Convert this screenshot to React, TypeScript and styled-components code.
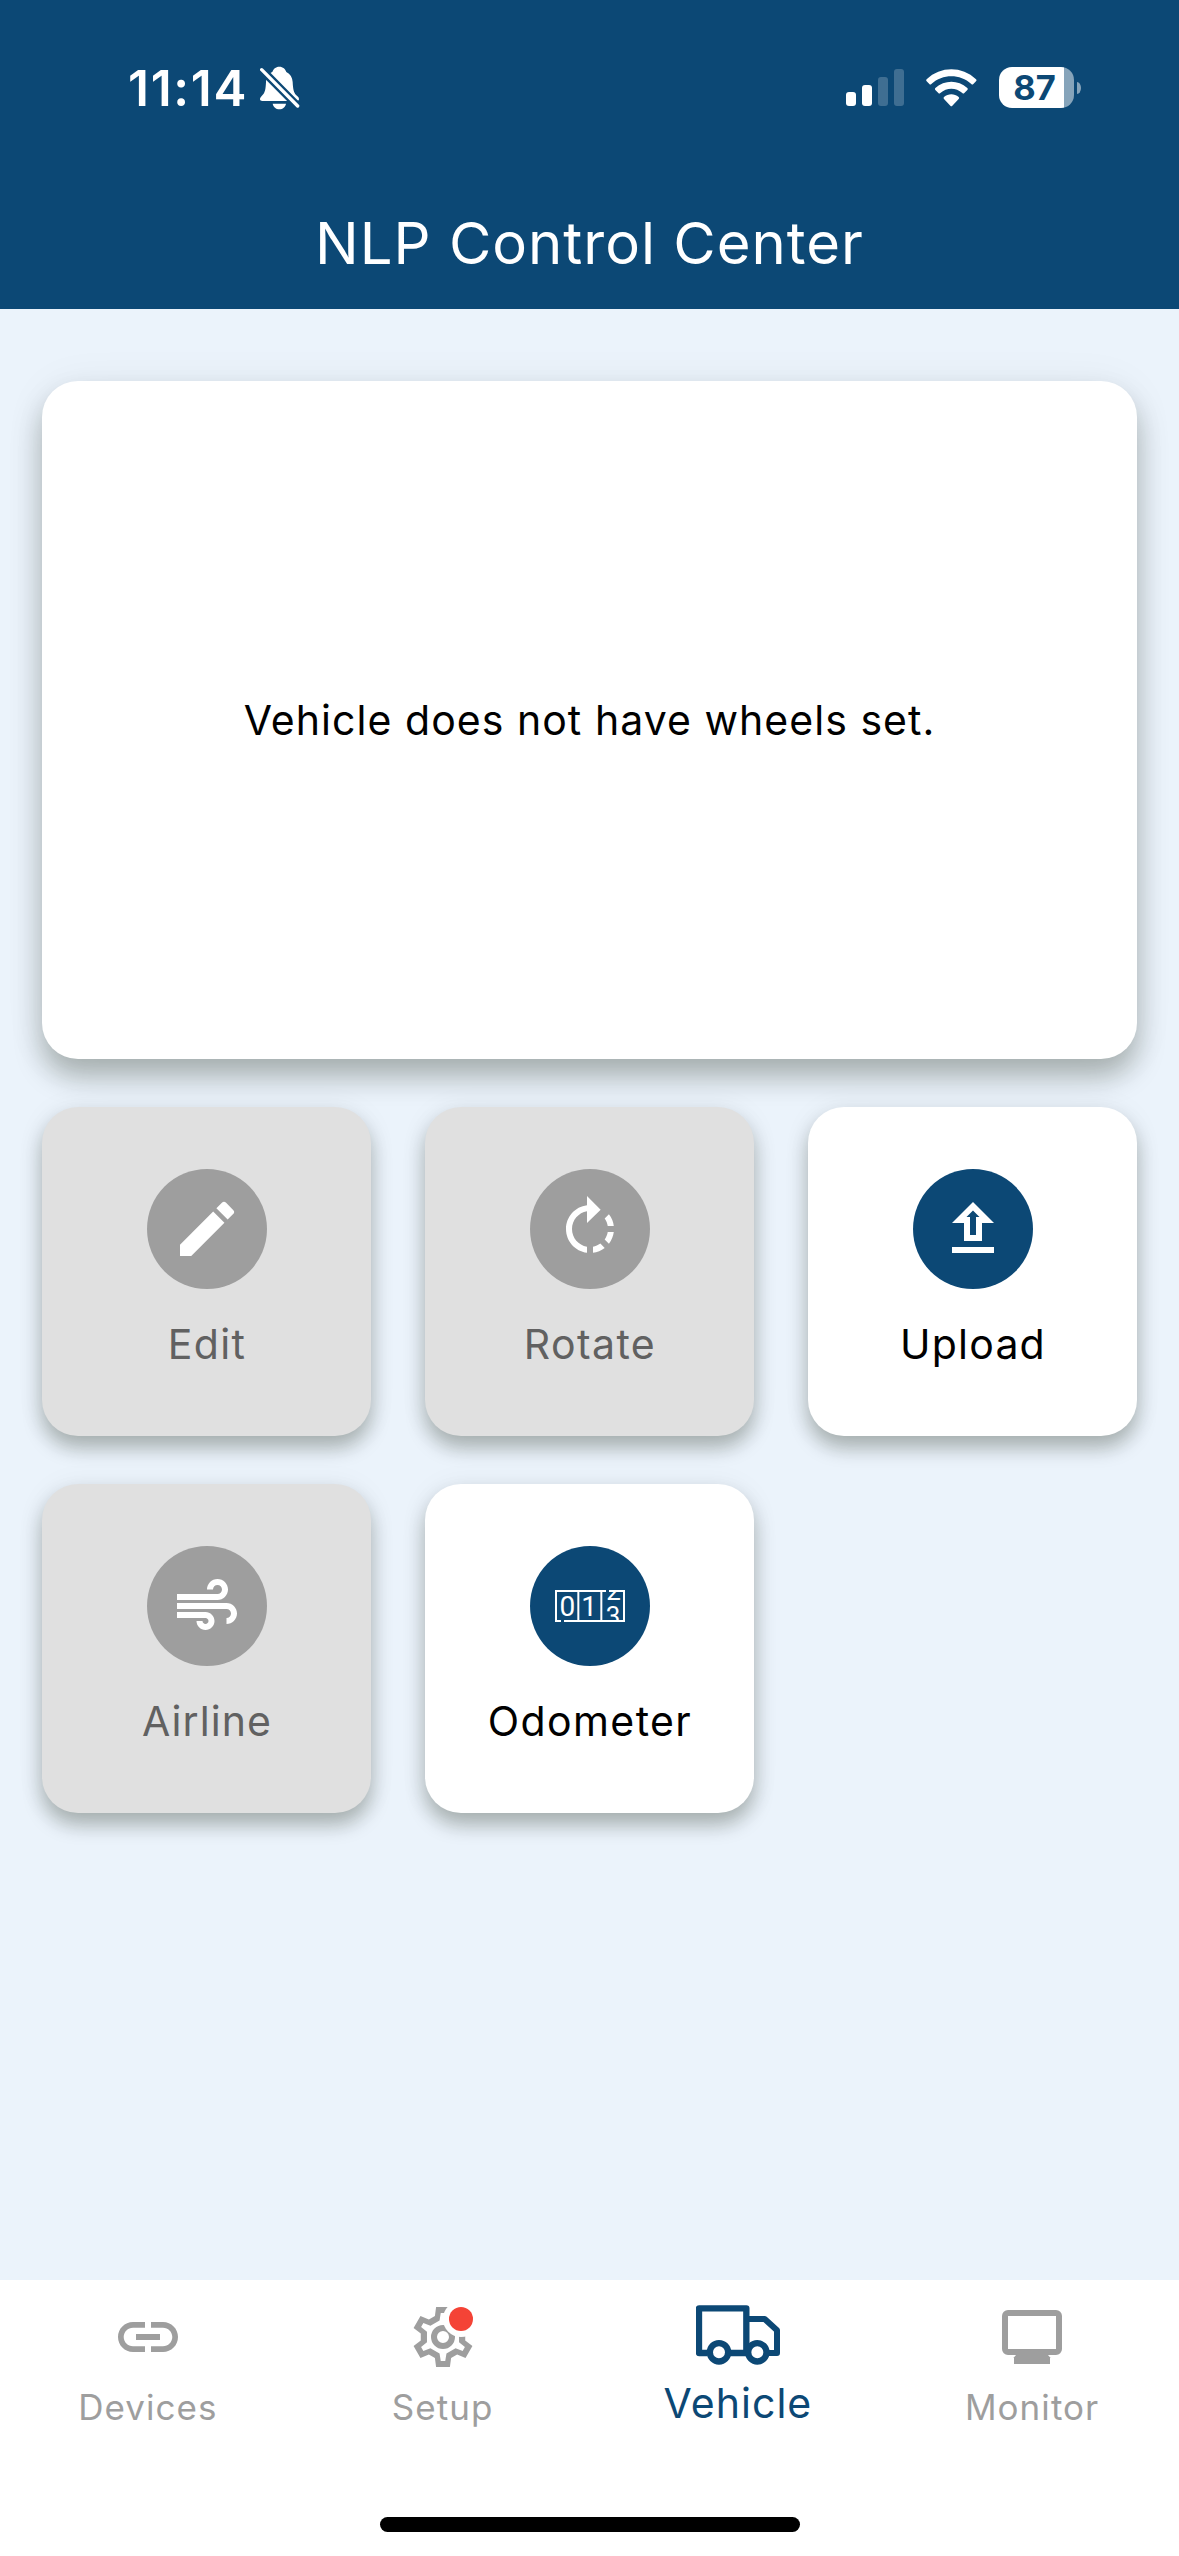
import React from 'react';
import styled, { createGlobalStyle } from 'styled-components';
import { MdAir, MdEdit, MdLink, MdRotateRight } from 'react-icons/md';

const NAVY = '#0c4875';
const GREY = '#9e9e9e';

const GlobalStyle = createGlobalStyle`
  * { box-sizing: border-box; }
  body {
    margin: 0;
    background: #ebf3fb;
    font-family: Inter, Roboto, "Liberation Sans", sans-serif;
  }
`;

const Screen = styled.div`
  width: 1179px;
  height: 2556px;
  display: flex;
  flex-direction: column;
  background: #ebf3fb;
  overflow: hidden;
`;

const Header = styled.header`
  height: 309px;
  flex: none;
  background: ${NAVY};
  color: #fff;
  display: flex;
  flex-direction: column;
`;

const StatusBar = styled.div`
  height: 177px;
  padding: 0 98px 2px 128px;
  display: flex;
  align-items: center;
  justify-content: space-between;
`;

const StatusGroup = styled.div<{ $gap: number }>`
  display: flex;
  align-items: center;
  gap: ${(p) => p.$gap}px;
`;

const Clock = styled.span`
  font-size: 49.5px;
  font-weight: 600;
  line-height: 60px;
  letter-spacing: 1.7px;
`;

const Battery = styled.div`
  display: flex;
  align-items: center;
  gap: 3px;
`;

const BatteryBody = styled.div`
  width: 75px;
  height: 41px;
  padding-right: 4px;
  border-radius: 13px;
  background: linear-gradient(90deg, #fff 65px, #86a4ba 65px);
  color: ${NAVY};
  display: flex;
  align-items: center;
  justify-content: center;
  font-size: 34.5px;
  font-weight: 700;
  line-height: 41px;
`;

const BatteryTip = styled.div`
  width: 4px;
  height: 12px;
  border-radius: 0 4px 4px 0 / 0 6px 6px 0;
  background: #86a4ba;
`;

const Title = styled.h1`
  margin: 0;
  height: 132px;
  display: flex;
  align-items: center;
  justify-content: center;
  font-size: 58px;
  font-weight: 400;
  letter-spacing: 1px;
  white-space: nowrap;
`;

const Main = styled.main`
  flex: 1;
  padding: 72px 42px 0;
  display: flex;
  flex-direction: column;
  gap: 48px;
`;

const WheelsCard = styled.section`
  height: 678px;
  flex: none;
  border-radius: 36px;
  background: #fff;
  color: #000;
  display: flex;
  align-items: center;
  justify-content: center;
  font-size: 41px;
  letter-spacing: 1.04px;
  white-space: nowrap;
  box-shadow: 0 18px 28px rgba(10, 20, 5, 0.28), 0 3px 44px rgba(10, 20, 5, 0.06);
`;

const Tiles = styled.div`
  display: grid;
  grid-template-columns: repeat(3, 329px);
  column-gap: 54px;
  row-gap: 48px;
`;

const Tile = styled.button<{ $disabled?: boolean }>`
  height: 329px;
  border: 0;
  padding: 62px 0 0;
  border-radius: 36px;
  font-family: inherit;
  background: ${(p) => (p.$disabled ? '#e0e0e0' : '#fff')};
  color: ${(p) => (p.$disabled ? '#616161' : '#000')};
  display: flex;
  flex-direction: column;
  align-items: center;
  gap: 30px;
  box-shadow: 0 12px 19px rgba(10, 20, 5, 0.28), 0 2px 30px rgba(10, 20, 5, 0.06);
`;

const TileIcon = styled.span<{ $disabled?: boolean }>`
  width: 120px;
  height: 120px;
  border-radius: 50%;
  background: ${(p) => (p.$disabled ? GREY : NAVY)};
  color: #fff;
  font-size: 72px;
  display: flex;
  align-items: center;
  justify-content: center;
`;

const TileLabel = styled.span<{ $tracking: number }>`
  font-size: 41px;
  line-height: 50px;
  padding-left: 1px;
  letter-spacing: ${(p) => p.$tracking}px;
`;

const BottomNav = styled.nav`
  height: 276px;
  flex: none;
  background: #fff;
  display: flex;
  flex-direction: column;
  justify-content: space-between;
  align-items: center;
`;

const NavItems = styled.div`
  width: 100%;
  display: grid;
  grid-template-columns: repeat(4, 1fr);
`;

const NavItem = styled.a<{ $active?: boolean }>`
  padding: ${(p) => (p.$active ? '19px 0 0 2px' : '21px 0 0 1px')};
  display: flex;
  flex-direction: column;
  align-items: center;
  color: ${(p) => (p.$active ? NAVY : GREY)};
  font-size: ${(p) => (p.$active ? 41 : 35)}px;
  line-height: ${(p) => (p.$active ? 50 : 42)}px;
  letter-spacing: 1.05px;
  gap: ${(p) => (p.$active ? 7 : 13)}px;
`;

const NavGlyph = styled.span`
  height: 72px;
  font-size: 72px;
  display: flex;
  align-items: center;
  justify-content: center;
`;

const HomeIndicator = styled.div`
  width: 420px;
  height: 15px;
  margin-bottom: 24px;
  border-radius: 8px;
  background: #000;
`;

const BellOff = () => (
  <svg width="40" height="44" viewBox="0 0 120 132" fill="#fff">
    <defs>
      <mask id="bell-cut">
        <rect width="120" height="132" fill="#fff" />
        <path d="M5 11L113 120" stroke="#000" strokeWidth="24" strokeLinecap="round" />
      </mask>
    </defs>
    <g mask="url(#bell-cut)">
      <path d="M58 2c-11 0-18 7-21 16C24 24 19 34 18 48c-1 22-3 32-11 40-5 5-7 8-7 12 0 3 3 5 7 5h103c4 0 7-2 7-5 0-5-3-8-8-12-8-9-10-19-11-40-1-14-7-24-19-30C76 9 69 2 58 2z" />
    </g>
    <path d="M38 113h40c-2 10-10 17-20 17s-18-7-20-17z" />
    <path d="M5 11L113 120" stroke="#fff" strokeWidth="10" strokeLinecap="round" />
  </svg>
);

const Signal = () => (
  <svg width="58" height="37" viewBox="0 0 58 37" fill="#fff">
    <rect x="0" y="23" width="10" height="14" rx="3" />
    <rect x="16" y="16" width="10" height="21" rx="3" />
    <rect x="32" y="8" width="10" height="29" rx="3" opacity=".21" />
    <rect x="48" y="0" width="10" height="37" rx="3" opacity=".21" />
  </svg>
);

const Wifi = () => (
  <svg width="51" height="38" viewBox="0 0 153 114" fill="#fff">
    <path d="M2 31C44-9 108-9 150 31q3 3 0 6l-8 8q-3 3-6 0C102 14 50 14 16 45q-3 3-6 0l-8-8q-3-3 0-6z" />
    <path d="M28 57c28-25 68-25 96 0q3 3 0 6l-9 9q-3 3-6 0c-19-17-47-17-66 0q-3 3-6 0l-9-9q-3-3 0-6z" />
    <path d="M54 84c13-11 31-11 44 0q3 3 0 6L79 110q-3 3-6 0L54 90q-3-3 0-6z" />
  </svg>
);

const Upload = () => (
  <svg width="72" height="72" viewBox="0 0 24 24" fill="#fff">
    <path d="M9 16h6v-6h4l-7-7-7 7h4v6zm3-10.17L14.17 8H13v6h-2V8H9.83L12 5.83zM5 18h14v2H5z" />
  </svg>
);

const Odometer = () => (
  <svg width="70" height="32" viewBox="165 213 210 96" fill="#fff" fontFamily="Roboto, sans-serif" fontSize="84">
    <defs>
      <clipPath id="reel-window">
        <rect x="307" y="218" width="65" height="86" />
      </clipPath>
    </defs>
    <path
      d="M318 216H168V306H183M192 306H372V216H327M235 216V306M304 216V306"
      fill="none"
      stroke="#fff"
      strokeWidth="6"
    />
    <text x="202" y="290" textAnchor="middle">0</text>
    <text x="267" y="290" textAnchor="middle">1</text>
    <g clipPath="url(#reel-window)" fontSize="78">
      <text x="341" y="243" textAnchor="middle">2</text>
      <text x="339" y="319" textAnchor="middle">3</text>
    </g>
  </svg>
);

const rotated = (points: number[][]) =>
  Array.from({ length: 6 }, (_, i) => {
    const a = (i * Math.PI) / 3;
    return points
      .map(([x, y]) => `${(x * Math.cos(a) - y * Math.sin(a)).toFixed(2)},${(x * Math.sin(a) + y * Math.cos(a)).toFixed(2)}`)
      .join(' ');
  }).join(' L');

const GEAR = `M${rotated([[-2.7, -7], [-2.3, -10], [2.3, -10], [2.7, -7]])}Z M${rotated([
  [-1.15, -5.5],
  [-0.75, -8],
  [0.75, -8],
  [1.15, -5.5],
])}Z`;

const SettingsWithBadge = () => (
  <svg width="72" height="72" viewBox="-12 -12 24 24">
    <defs>
      <mask id="badge-cut">
        <rect x="-12" y="-12" width="24" height="24" fill="#fff" />
        <circle cx="6" cy="-6" r="6" fill="#000" />
      </mask>
    </defs>
    <g mask="url(#badge-cut)">
      <path d={GEAR} fill={GREY} fillRule="evenodd" />
      <circle r="3" fill="none" stroke={GREY} strokeWidth="2" />
    </g>
    <circle cx="6" cy="-6" r="4" fill="#f44336" />
  </svg>
);

const Truck = () => (
  <svg width="84" height="60" viewBox="228 105 252 180" fill="none" stroke={NAVY}>
    <path d="M262 249H237V115H379V249H330" strokeWidth="19" strokeLinejoin="round" />
    <path d="M385 147H434L471 181V249H445" strokeWidth="18" strokeLinejoin="round" />
    <circle cx="297" cy="247" r="27.5" strokeWidth="19" fill="#fff" />
    <circle cx="412" cy="247" r="27.5" strokeWidth="19" fill="#fff" />
  </svg>
);

const Monitor = () => (
  <svg width="60" height="54" viewBox="0 0 180 162">
    <rect x="9" y="9" width="162" height="117" rx="9" fill="none" stroke={GREY} strokeWidth="18" />
    <path d="M45 132H135L144 142V162H36V142Z" fill={GREY} />
  </svg>
);

const tiles = [
  { label: 'Edit', icon: <MdEdit />, disabled: true, tracking: 1.4 },
  { label: 'Rotate', icon: <MdRotateRight />, disabled: true, tracking: 1.4 },
  { label: 'Upload', icon: <Upload />, disabled: false, tracking: 1.2 },
  { label: 'Airline', icon: <MdAir />, disabled: true, tracking: 1.1 },
  { label: 'Odometer', icon: <Odometer />, disabled: false, tracking: 1.4 },
];

const tabs = [
  { label: 'Devices', icon: <MdLink />, active: false },
  { label: 'Setup', icon: <SettingsWithBadge />, active: false },
  { label: 'Vehicle', icon: <Truck />, active: true },
  { label: 'Monitor', icon: <Monitor />, active: false },
];

export default function App() {
  return (
    <>
      <GlobalStyle />
      <Screen>
        <Header>
          <StatusBar>
            <StatusGroup $gap={12}>
              <Clock>11:14</Clock>
              <BellOff />
            </StatusGroup>
            <StatusGroup $gap={22}>
              <Signal />
              <Wifi />
              <Battery>
                <BatteryBody>87</BatteryBody>
                <BatteryTip />
              </Battery>
            </StatusGroup>
          </StatusBar>
          <Title>NLP Control Center</Title>
        </Header>
        <Main>
          <WheelsCard>Vehicle does not have wheels set.</WheelsCard>
          <Tiles>
            {tiles.map((t) => (
              <Tile key={t.label} $disabled={t.disabled}>
                <TileIcon $disabled={t.disabled}>{t.icon}</TileIcon>
                <TileLabel $tracking={t.tracking}>{t.label}</TileLabel>
              </Tile>
            ))}
          </Tiles>
        </Main>
        <BottomNav>
          <NavItems>
            {tabs.map((t) => (
              <NavItem key={t.label} $active={t.active}>
                <NavGlyph>{t.icon}</NavGlyph>
                {t.label}
              </NavItem>
            ))}
          </NavItems>
          <HomeIndicator />
        </BottomNav>
      </Screen>
    </>
  );
}
